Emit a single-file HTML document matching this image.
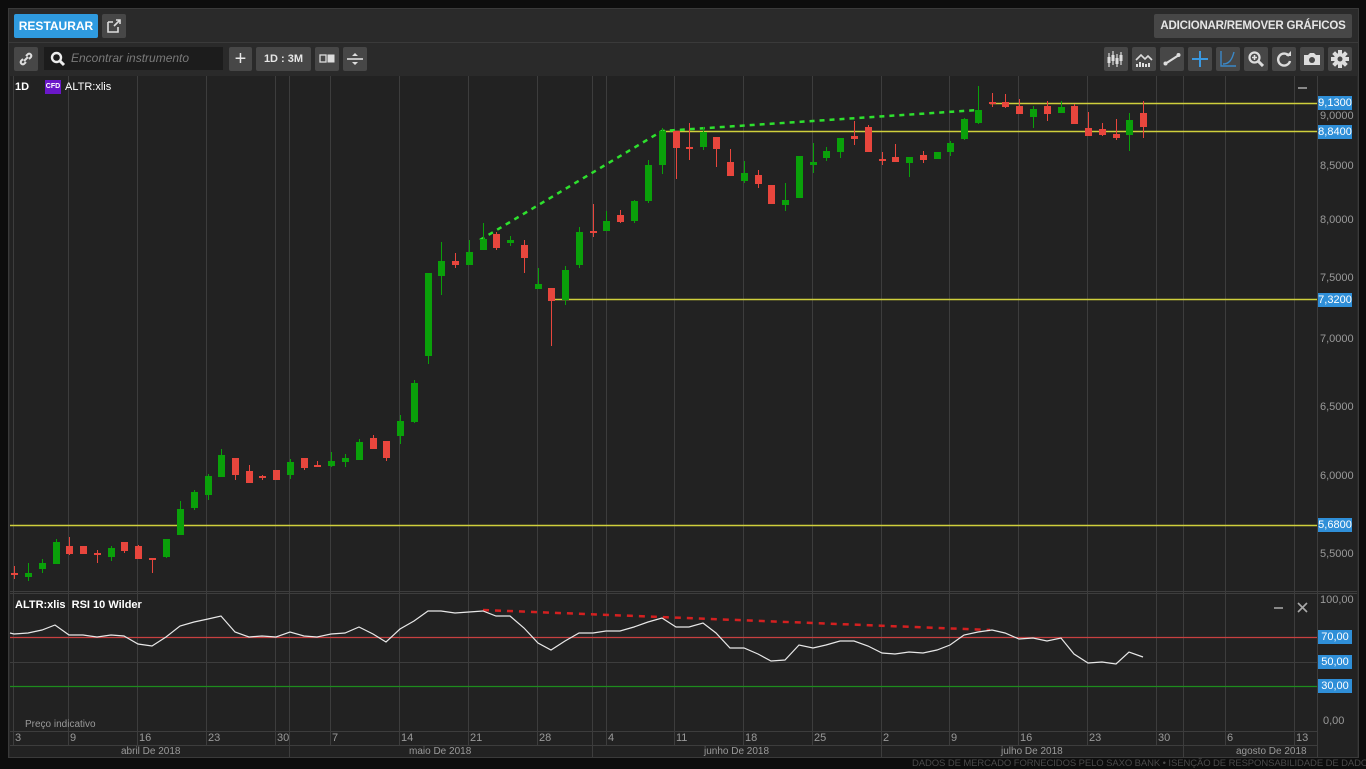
<!DOCTYPE html>
<html><head><meta charset="utf-8"><style>
*{margin:0;padding:0;box-sizing:border-box}
body{width:1366px;height:768px;background:#0d0d0d;font-family:"Liberation Sans",sans-serif;position:relative;overflow:hidden}
.panel{position:absolute;left:8px;top:8px;width:1351px;height:750px;background:#2a2a2a;border:1px solid #3a3a3a}
.btn{position:absolute;background:#474747;border-radius:2px;color:#e6e6e6;font-weight:bold;font-size:11px;display:flex;align-items:center;justify-content:center;white-space:nowrap}
.abs{position:absolute;white-space:nowrap}
.ax{position:absolute;color:#9a9a9a;font-size:11px;white-space:nowrap}
.pl{position:absolute;left:1318px;width:34px;height:14px;background:#2f8fd8;color:#fff;font-size:11px;line-height:14px;text-align:center}
</style></head><body>
<div class="panel"></div>
<!-- row1 -->
<div class="btn" style="left:14px;top:14px;width:84px;height:24px;background:#2f9be0;color:#fff;font-size:12px">RESTAURAR</div>
<div class="btn" style="left:102px;top:14px;width:24px;height:24px"><svg width="14" height="14" viewBox="0 0 14 14"><path d="M1 3h5M1 3v10h10V8" stroke="#ddd" stroke-width="1.6" fill="none"/><path d="M7 7l6-6M9 1h4v4" stroke="#ddd" stroke-width="1.6" fill="none"/></svg></div>
<div class="btn" style="left:1154px;top:14px;width:198px;height:24px;font-size:11.5px;letter-spacing:-0.2px">ADICIONAR/REMOVER GRÁFICOS</div>
<div class="abs" style="left:9px;top:42px;width:1349px;height:1px;background:#3a3a3a"></div>
<!-- row2 -->
<div class="btn" style="left:14px;top:47px;width:24px;height:24px"><svg width="16" height="16" viewBox="0 0 16 16"><path d="M6 10l4-4M5 8l-2 2a2.2 2.2 0 003 3l2-2M11 8l2-2a2.2 2.2 0 00-3-3L8 5" stroke="#ddd" stroke-width="2" fill="none"/></svg></div>
<div class="abs" style="left:44px;top:47px;width:179px;height:23px;background:#1c1c1c"></div>
<svg class="abs" style="left:50px;top:51px" width="16" height="16" viewBox="0 0 16 16"><circle cx="6.5" cy="6.5" r="4.5" stroke="#eee" stroke-width="2.4" fill="none"/><path d="M10 10l4 4" stroke="#eee" stroke-width="3"/></svg>
<div class="abs" style="left:71px;top:51px;color:#7a7a7a;font-size:12px;font-style:italic">Encontrar instrumento</div>
<div class="btn" style="left:229px;top:47px;width:23px;height:24px;font-size:20px;font-weight:normal">+</div>
<div class="btn" style="left:256px;top:47px;width:55px;height:24px">1D : 3M</div>
<div class="btn" style="left:315px;top:47px;width:24px;height:24px"><svg width="16" height="10"><rect x="1" y="1" width="6" height="7" stroke="#ddd" fill="none" stroke-width="1.3"/><rect x="8.5" y="0.5" width="7" height="8" fill="#ddd"/></svg></div>
<div class="btn" style="left:343px;top:47px;width:24px;height:24px"><svg width="16" height="14"><path d="M0 7h16" stroke="#ddd" stroke-width="1.6"/><path d="M5 4l3-3 3 3M5 10l3 3 3-3" fill="#ddd"/></svg></div>
<div class="btn" style="left:1104px;top:47px;width:24px;height:24px"><svg width="18" height="16"><g stroke="#ddd" stroke-width="1.2"><path d="M2 2v14M6 0v14M10 3v13M14 1v13"/></g><g fill="#ddd"><rect x="0.5" y="6" width="3" height="6"/><rect x="4.5" y="4" width="3" height="6"/><rect x="8.5" y="7" width="3" height="6"/><rect x="12.5" y="4" width="3" height="6"/></g></svg></div>
<div class="btn" style="left:1132px;top:47px;width:24px;height:24px"><svg width="18" height="16"><path d="M1 9l5-5 4 4 3-3 4 4" stroke="#ddd" stroke-width="1.6" fill="none"/><g fill="#ddd"><rect x="1" y="13" width="2" height="3"/><rect x="4" y="11" width="2" height="5"/><rect x="7" y="12" width="2" height="4"/><rect x="10" y="13" width="2" height="3"/><rect x="13" y="12" width="2" height="4"/></g></svg></div>
<div class="btn" style="left:1160px;top:47px;width:24px;height:24px"><svg width="18" height="14"><path d="M2 12L16 3" stroke="#ddd" stroke-width="2.2"/><circle cx="2.5" cy="11.5" r="2" fill="#ddd"/><circle cx="15.5" cy="3" r="2" fill="#ddd"/></svg></div>
<div class="btn" style="left:1188px;top:47px;width:24px;height:24px"><svg width="18" height="18"><path d="M9 1v16M1 9h16" stroke="#3a98e0" stroke-width="2"/></svg></div>
<div class="btn" style="left:1216px;top:47px;width:24px;height:24px"><svg width="18" height="18"><path d="M2 1v15h15M4 14c6 0 9-4 11-12" stroke="#3a88c8" stroke-width="1.4" fill="none"/></svg></div>
<div class="btn" style="left:1244px;top:47px;width:24px;height:24px"><svg width="16" height="16"><circle cx="6.5" cy="6.5" r="5" stroke="#ddd" stroke-width="2.2" fill="none"/><path d="M4 6.5h5M6.5 4v5" stroke="#ddd" stroke-width="1.6"/><path d="M10 10l5 5" stroke="#ddd" stroke-width="3"/></svg></div>
<div class="btn" style="left:1272px;top:47px;width:24px;height:24px"><svg width="16" height="16"><path d="M13 5A6 6 0 1 0 14 10" stroke="#ddd" stroke-width="2.4" fill="none"/><path d="M10 5h5V0z" fill="#ddd"/></svg></div>
<div class="btn" style="left:1300px;top:47px;width:24px;height:24px"><svg width="18" height="14"><path d="M1 3h4l2-2h4l2 2h4v10H1z" fill="#ddd"/><circle cx="9" cy="8" r="3" fill="#474747"/></svg></div>
<div class="btn" style="left:1328px;top:47px;width:24px;height:24px"><svg width="18" height="18" viewBox="0 0 18 18"><g fill="#ddd"><circle cx="9" cy="9" r="6"/><rect x="7" y="0" width="4" height="18"/><rect x="0" y="7" width="18" height="4"/><rect x="7" y="0" width="4" height="18" transform="rotate(45 9 9)"/><rect x="7" y="0" width="4" height="18" transform="rotate(-45 9 9)"/></g><circle cx="9" cy="9" r="2.5" fill="#474747"/></svg></div>

<!-- chart -->
<svg class="abs" style="left:0;top:0" width="1366" height="768">
<rect x="10" y="76" width="1347" height="681" fill="#222"/>
<g stroke="#3d3d3d" stroke-width="1">
<path d="M13.5 76V745M68.5 76V745M137.5 76V745M206.5 76V745M275.5 76V745M289.5 76V757M330.5 76V745M399.5 76V745M468.5 76V745M537.5 76V745M592.5 76V757M606.5 76V745M674.5 76V745M743.5 76V745M812.5 76V745M881.5 76V757M949.5 76V745M1018.5 76V745M1087.5 76V745M1156.5 76V745M1183.5 76V757M1225.5 76V745M1294.5 76V745"/>
<path d="M1317.5 76V757M10 731.5H1317M10 745.5H1317M10 591.5H1357M10 593.5H1357M10 662.5H1317"/>
</g>
<g stroke="#cfcf3c" stroke-width="1.5"><path d="M990 103.5H1317M662 131.5H1317M551 299.5H1317M10 525.5H1317"/></g>
<g stroke="#2ee02e" stroke-width="2.5" stroke-dasharray="5 5" fill="none"><path d="M480 240L662 131L978 110"/></g>
<g fill="#0aa00a" stroke="#0aa00a" stroke-width="1">
<path d="M28.5 563V581M42.5 559V573M56.5 539V564M111.5 546V561M166.5 539V558M180.5 501V535M194.5 490V510M208.5 474V500M221.5 449V477M290.5 459V479M331.5 452V467M345.5 454V467M359.5 439V460M400.5 415V444M414.5 380V423M428.5 273V364M441.5 242V295M469.5 240V265M483.5 223V250M510.5 236V246M538.5 268V289M565.5 266V305M579.5 227V268M606.5 211V231M634.5 200V223M648.5 160V203M662.5 128V174M703.5 127V150M744.5 161V183M785.5 183V211M799.5 156V198M813.5 143V173M826.5 147V161M840.5 138V158M909.5 157V177M937.5 152V159M950.5 141V156M964.5 118V140M978.5 86V124M1033.5 106V128M1061.5 101V113M1129.5 113V151"/>
<g stroke="none">
<rect x="25" y="573" width="7" height="4"/><rect x="39" y="563" width="7" height="6"/><rect x="53" y="542" width="7" height="22"/><rect x="108" y="548" width="7" height="9"/><rect x="163" y="539" width="7" height="18"/><rect x="177" y="509" width="7" height="26"/><rect x="191" y="492" width="7" height="16"/><rect x="205" y="476" width="7" height="19"/><rect x="218" y="455" width="7" height="22"/><rect x="287" y="462" width="7" height="13"/><rect x="328" y="461" width="7" height="5"/><rect x="342" y="458" width="7" height="4"/><rect x="356" y="442" width="7" height="18"/><rect x="397" y="421" width="7" height="15"/><rect x="411" y="383" width="7" height="39"/><rect x="425" y="273" width="7" height="83"/><rect x="438" y="261" width="7" height="15"/><rect x="466" y="252" width="7" height="13"/><rect x="480" y="239" width="7" height="11"/><rect x="507" y="240" width="7" height="3"/><rect x="535" y="284" width="7" height="5"/><rect x="562" y="270" width="7" height="30"/><rect x="576" y="232" width="7" height="33"/><rect x="603" y="221" width="7" height="10"/><rect x="631" y="201" width="7" height="20"/><rect x="645" y="165" width="7" height="36"/><rect x="659" y="131" width="7" height="34"/><rect x="700" y="132" width="7" height="15"/><rect x="741" y="173" width="7" height="8"/><rect x="782" y="200" width="7" height="5"/><rect x="796" y="156" width="7" height="42"/><rect x="810" y="162" width="7" height="3"/><rect x="823" y="151" width="7" height="7"/><rect x="837" y="138" width="7" height="14"/><rect x="906" y="157" width="7" height="6"/><rect x="934" y="152" width="7" height="7"/><rect x="947" y="143" width="7" height="9"/><rect x="961" y="119" width="7" height="20"/><rect x="975" y="110" width="7" height="13"/><rect x="1030" y="109" width="7" height="8"/><rect x="1058" y="107" width="7" height="6"/><rect x="1126" y="120" width="7" height="15"/>
</g></g>
<g fill="#e8463d" stroke="#e8463d" stroke-width="1">
<path d="M14.5 566V579M69.5 537V555M83.5 546V554M97.5 550V563M124.5 542V553M138.5 545V559M152.5 558V573M235.5 458V480M249.5 465V483M262.5 475V480M276.5 470V480M304.5 458V470M317.5 461V467M373.5 435V449M386.5 441V461M455.5 253V268M496.5 232V250M524.5 240V273M551.5 288V346M593.5 204V237M620.5 210V223M676.5 131V179M689.5 123V160M716.5 137V167M730.5 149V176M758.5 170V188M771.5 185V204M854.5 121V145M868.5 125V152M882.5 152V165M895.5 144V162M923.5 151V163M992.5 93V107M1005.5 94V108M1019.5 99V114M1047.5 101V121M1074.5 104V124M1088.5 112V136M1102.5 123V136M1116.5 119V140M1143.5 101V138"/>
<g stroke="none">
<rect x="11" y="573" width="7" height="2"/><rect x="66" y="546" width="7" height="8"/><rect x="80" y="546" width="7" height="8"/><rect x="94" y="553" width="7" height="2"/><rect x="121" y="542" width="7" height="9"/><rect x="135" y="546" width="7" height="13"/><rect x="149" y="558" width="7" height="2"/><rect x="232" y="458" width="7" height="17"/><rect x="246" y="471" width="7" height="12"/><rect x="259" y="476" width="7" height="2"/><rect x="273" y="470" width="7" height="10"/><rect x="301" y="458" width="7" height="10"/><rect x="314" y="465" width="7" height="2"/><rect x="370" y="438" width="7" height="11"/><rect x="383" y="441" width="7" height="17"/><rect x="452" y="261" width="7" height="4"/><rect x="493" y="234" width="7" height="14"/><rect x="521" y="245" width="7" height="13"/><rect x="548" y="288" width="7" height="13"/><rect x="590" y="231" width="7" height="2"/><rect x="617" y="215" width="7" height="7"/><rect x="673" y="131" width="7" height="17"/><rect x="686" y="147" width="7" height="2"/><rect x="713" y="137" width="7" height="12"/><rect x="727" y="162" width="7" height="14"/><rect x="755" y="175" width="7" height="9"/><rect x="768" y="185" width="7" height="19"/><rect x="851" y="136" width="7" height="3"/><rect x="865" y="127" width="7" height="25"/><rect x="879" y="159" width="7" height="2"/><rect x="892" y="157" width="7" height="5"/><rect x="920" y="155" width="7" height="5"/><rect x="989" y="102" width="7" height="2"/><rect x="1002" y="102" width="7" height="5"/><rect x="1016" y="106" width="7" height="8"/><rect x="1044" y="106" width="7" height="8"/><rect x="1071" y="106" width="7" height="18"/><rect x="1085" y="128" width="7" height="8"/><rect x="1099" y="129" width="7" height="6"/><rect x="1113" y="134" width="7" height="4"/><rect x="1140" y="113" width="7" height="14"/>
</g></g>
<!-- RSI -->
<path d="M10 637.5H1317" stroke="#c84040" stroke-width="1.2"/>
<path d="M10 686.5H1317" stroke="#1e8c1e" stroke-width="1.2"/>
<path d="M483 610L990 630" stroke="#d42020" stroke-width="2.5" stroke-dasharray="6 6"/>
<polyline fill="none" stroke="#e8e8e8" stroke-width="1.2" points="10,633 14,634 28,633 42,630 55,625 69,635 83,635 97,637 111,635 124,636 138,644 152,646 166,637 180,626 194,622 208,619 221,616 235,632 249,637 262,636 276,637 290,632 304,636 317,637 331,634 345,633 359,627 373,634 386,642 400,629 414,621 428,611 441,611 455,613 469,612 483,611 496,616 510,616 524,628 538,643 551,650 565,641 579,633 593,633 606,631 620,631 634,627 648,622 662,618 676,627 689,627 703,623 716,633 730,648 744,648 758,654 771,661 785,660 799,645 813,648 826,645 840,641 854,641 868,646 882,653 895,654 909,652 923,653 937,650 950,645 964,635 978,632 992,630 1005,633 1019,639 1033,638 1047,641 1061,638 1074,654 1088,663 1102,662 1116,664 1129,652 1143,657"/>
<path d="M1298 88h9M1274 608h9M1298 603l9 9M1307 603l-9 9" stroke="#aaa" stroke-width="1.6"/>
</svg>

<div class="abs" style="left:15px;top:81px;color:#fff;font-size:11px;font-weight:bold">1D</div>
<div class="abs" style="left:45px;top:80px;width:16px;height:14px;background:#6a17c9;color:#fff;font-size:7px;font-weight:bold;line-height:14px;text-align:center">CFD</div>
<div class="abs" style="left:65px;top:81px;color:#fff;font-size:11px">ALTR:xlis</div>
<div class="abs" style="left:15px;top:599px;color:#fff;font-size:11px;font-weight:bold">ALTR:xlis&nbsp; RSI 10 Wilder</div>
<div class="ax" style="left:25px;top:719px;font-size:10px">Preço indicativo</div>

<div class="ax" style="left:1320px;top:110px">9,0000</div>
<div class="ax" style="left:1320px;top:160px">8,5000</div>
<div class="ax" style="left:1320px;top:214px">8,0000</div>
<div class="ax" style="left:1320px;top:272px">7,5000</div>
<div class="ax" style="left:1320px;top:333px">7,0000</div>
<div class="ax" style="left:1320px;top:401px">6,5000</div>
<div class="ax" style="left:1320px;top:470px">6,0000</div>
<div class="ax" style="left:1320px;top:548px">5,5000</div>
<div class="pl" style="top:96px">9,1300</div>
<div class="pl" style="top:125px">8,8400</div>
<div class="pl" style="top:293px">7,3200</div>
<div class="pl" style="top:518px">5,6800</div>
<div class="ax" style="left:1320px;top:594px">100,00</div>
<div class="ax" style="left:1323px;top:715px">0,00</div>
<div class="pl" style="top:630px">70,00</div>
<div class="pl" style="top:655px">50,00</div>
<div class="pl" style="top:679px">30,00</div>

<div class="ax" style="left:15px;top:732px">3</div><div class="ax" style="left:70px;top:732px">9</div><div class="ax" style="left:139px;top:732px">16</div><div class="ax" style="left:208px;top:732px">23</div><div class="ax" style="left:277px;top:732px">30</div><div class="ax" style="left:332px;top:732px">7</div><div class="ax" style="left:401px;top:732px">14</div><div class="ax" style="left:470px;top:732px">21</div><div class="ax" style="left:539px;top:732px">28</div><div class="ax" style="left:608px;top:732px">4</div><div class="ax" style="left:676px;top:732px">11</div><div class="ax" style="left:745px;top:732px">18</div><div class="ax" style="left:814px;top:732px">25</div><div class="ax" style="left:883px;top:732px">2</div><div class="ax" style="left:951px;top:732px">9</div><div class="ax" style="left:1020px;top:732px">16</div><div class="ax" style="left:1089px;top:732px">23</div><div class="ax" style="left:1158px;top:732px">30</div><div class="ax" style="left:1227px;top:732px">6</div><div class="ax" style="left:1296px;top:732px">13</div>
<div class="ax" style="left:121px;top:746px;font-size:10px">abril De 2018</div>
<div class="ax" style="left:409px;top:746px;font-size:10px">maio De 2018</div>
<div class="ax" style="left:704px;top:746px;font-size:10px">junho De 2018</div>
<div class="ax" style="left:1001px;top:746px;font-size:10px">julho De 2018</div>
<div class="ax" style="left:1236px;top:746px;font-size:10px">agosto De 2018</div>
<div class="ax" style="left:912px;top:758px;font-size:9.5px;color:#4a4a4a;letter-spacing:-0.1px">DADOS DE MERCADO FORNECIDOS PELO SAXO BANK • ISENÇÃO DE RESPONSABILIDADE DE DADOS</div>
</body></html>
